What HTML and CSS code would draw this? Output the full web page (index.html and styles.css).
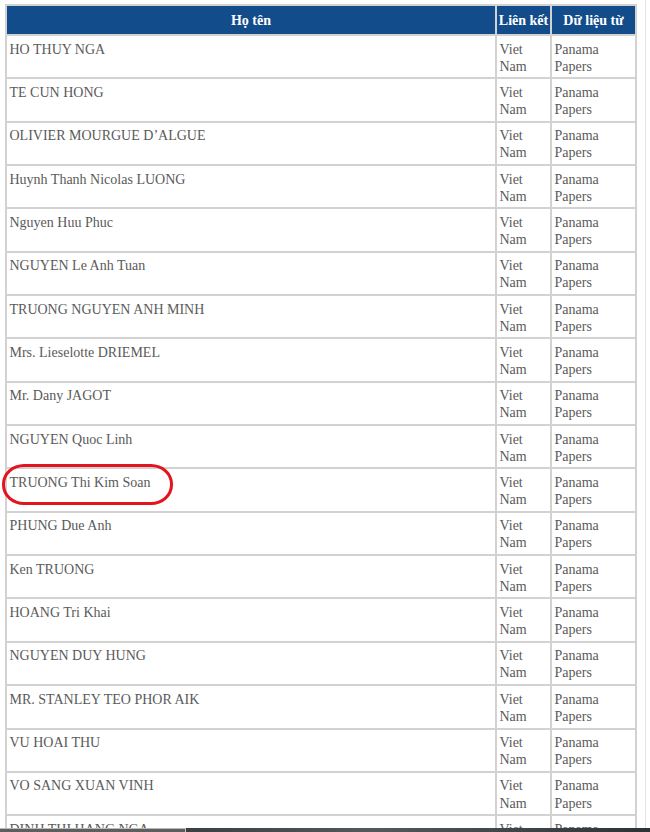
FILE: index.html
```html
<!DOCTYPE html>
<html lang="vi">
<head>
<meta charset="utf-8">
<title>Panama Papers</title>
<link rel="stylesheet" href="styles.css">
</head>
<body>
<div class="page">
  <table class="list">
    <colgroup>
      <col class="c-name">
      <col class="c-link">
      <col class="c-src">
    </colgroup>
    <thead>
      <tr><th>Họ tên</th><th>Liên kết</th><th>Dữ liệu từ</th></tr>
    </thead>
    <tbody>
      <tr><td>HO THUY NGA</td><td>Viet Nam</td><td>Panama Papers</td></tr>
      <tr><td>TE CUN HONG</td><td>Viet Nam</td><td>Panama Papers</td></tr>
      <tr><td>OLIVIER MOURGUE D’ALGUE</td><td>Viet Nam</td><td>Panama Papers</td></tr>
      <tr><td>Huynh Thanh Nicolas LUONG</td><td>Viet Nam</td><td>Panama Papers</td></tr>
      <tr><td>Nguyen Huu Phuc</td><td>Viet Nam</td><td>Panama Papers</td></tr>
      <tr><td>NGUYEN Le Anh Tuan</td><td>Viet Nam</td><td>Panama Papers</td></tr>
      <tr><td>TRUONG NGUYEN ANH MINH</td><td>Viet Nam</td><td>Panama Papers</td></tr>
      <tr><td>Mrs. Lieselotte DRIEMEL</td><td>Viet Nam</td><td>Panama Papers</td></tr>
      <tr><td>Mr. Dany JAGOT</td><td>Viet Nam</td><td>Panama Papers</td></tr>
      <tr><td>NGUYEN Quoc Linh</td><td>Viet Nam</td><td>Panama Papers</td></tr>
      <tr><td class="marked">TRUONG Thi Kim Soan<span class="ring"></span></td><td>Viet Nam</td><td>Panama Papers</td></tr>
      <tr><td>PHUNG Due Anh</td><td>Viet Nam</td><td>Panama Papers</td></tr>
      <tr><td>Ken TRUONG</td><td>Viet Nam</td><td>Panama Papers</td></tr>
      <tr><td>HOANG Tri Khai</td><td>Viet Nam</td><td>Panama Papers</td></tr>
      <tr><td>NGUYEN DUY HUNG</td><td>Viet Nam</td><td>Panama Papers</td></tr>
      <tr><td>MR. STANLEY TEO PHOR AIK</td><td>Viet Nam</td><td>Panama Papers</td></tr>
      <tr><td>VU HOAI THU</td><td>Viet Nam</td><td>Panama Papers</td></tr>
      <tr><td>VO SANG XUAN VINH</td><td>Viet Nam</td><td>Panama Papers</td></tr>
      <tr><td>DINH THI HANG NGA</td><td>Viet Nam</td><td>Panama Papers</td></tr>
    </tbody>
  </table>
</div>
<div class="taskbar"><span class="tb-left"></span><span class="tb-right"></span></div>
</body>
</html>
```

FILE: styles.css
```css
html, body {
  margin: 0;
  padding: 0;
  background: #ffffff;
  overflow: hidden;
}
body {
  width: 650px;
  height: 832px;
  position: relative;
  font-family: "Liberation Serif", "Times New Roman", serif;
}
.page {
  width: 646px;
  height: 832px;
  box-sizing: border-box;
  padding: 4px 0 0 5px;
  border-right: 1px solid #e4e4e4;
}
.list {
  border-collapse: collapse;
  table-layout: fixed;
  width: 630px;
  border: 2px solid #d2d2d2;
}
.c-name { width: 490px; }
.c-link { width: 55px; }
.c-src { width: 85px; }
.list th {
  background: #124c8a;
  color: #ffffff;
  font-weight: bold;
  font-size: 14px;
  line-height: 17px;
  height: 17px;
  padding: 6px 0 5px 0;
  text-align: center;
  border: 2px solid #d2d2d2;
  white-space: nowrap;
}
.list td {
  color: #5a5a5a;
  font-size: 14px;
  line-height: 17.175px;
  padding: 4.5px 2px 2.5px 2.5px;
  vertical-align: top;
  border: 2px solid #d2d2d2;
}
.marked {
  position: relative;
}
.ring {
  position: absolute;
  left: -5.5px;
  top: -5.5px;
  width: 165px;
  height: 35px;
  border: 3.5px solid #e4141e;
  border-radius: 22px / 20px;
}
.taskbar {
  position: absolute;
  left: 0;
  bottom: 0;
  width: 650px;
  height: 4px;
  display: flex;
}
.tb-left {
  width: 185px;
  background: #5e5e5e;
  border-top: 1px solid #b8b8b8;
  border-right: 1px solid #c8c8c8;
}
.tb-right {
  flex: 1;
  background: linear-gradient(90deg, #3c3f42, #55585b 40%, #2f3235);
}
```
